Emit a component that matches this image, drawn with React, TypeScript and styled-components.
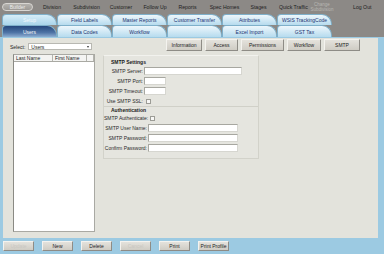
import styled, { createGlobalStyle } from "styled-components";

const GlobalStyle = createGlobalStyle`
  html, body {
    margin: 0;
    padding: 0;
  }
  body {
    font-family: "Liberation Sans", Arial, sans-serif;
  }
  * {
    box-sizing: border-box;
  }
`;

const Page = styled.div`
  width: 384px;
  height: 254px;
  background: #8c8986;
  overflow: hidden;
  display: flex;
  flex-direction: column;
`;

const TopNav = styled.div`
  height: 14px;
  display: flex;
  align-items: center;
  padding-left: 2px;
  font-size: 5px;
  color: #222;
`;

const BuilderPill = styled.div`
  width: 31px;
  height: 8px;
  border-radius: 4px;
  border: 1px solid #d8d6d2;
  background: linear-gradient(#b4b2ae, #9c9995);
  color: #ececec;
  display: flex;
  align-items: center;
  justify-content: center;
`;

const NavItem = styled.div<{ $w: number; $m: number; $muted?: boolean }>`
  width: ${(p) => p.$w}px;
  margin-left: ${(p) => p.$m}px;
  text-align: center;
  white-space: nowrap;
  line-height: 5px;
  color: ${(p) => (p.$muted ? "#b9b7b3" : "#222")};
  font-size: ${(p) => (p.$muted ? "4.5px" : "5.2px")};
`;

const TabRows = styled.div`
  width: 332px;
  padding-left: 2px;
  display: flex;
  flex-direction: column;
`;

const TabRow = styled.div<{ $h: number }>`
  height: ${(p) => p.$h}px;
  display: grid;
  grid-template-columns: repeat(6, 1fr);
`;

const Tab = styled.div<{ $tone?: "group" | "active" }>`
  display: flex;
  align-items: center;
  justify-content: center;
  font-size: 5px;
  border: 1px solid #7fb0ca;
  border-bottom: none;
  border-radius: 4px 10px 0 0;
  background: ${(p) =>
    p.$tone === "active"
      ? "linear-gradient(#25477c, #4f74a6 60%, #8eaed2)"
      : p.$tone === "group"
      ? "linear-gradient(#d6edf8, #a9d4ea)"
      : "linear-gradient(#eef7fc, #b6dbee)"};
  color: ${(p) => (p.$tone ? "#f4f8fb" : "#1c3270")};
`;

const Frame = styled.div`
  flex: 1;
  background: #9ccae2;
  padding: 1px 6px 0 3px;
  display: flex;
  flex-direction: column;
`;

const Panel = styled.div`
  height: 200px;
  background: #e3e3dc;
  display: flex;
`;

const LeftCol = styled.div`
  width: 100px;
  padding: 5px 0 0 7px;
  display: flex;
  flex-direction: column;
`;

const SelectRow = styled.div`
  display: flex;
  align-items: center;
  height: 7px;
  font-size: 5px;
  color: #222;
`;

const Dropdown = styled.div`
  margin-left: 3px;
  width: 64px;
  height: 7px;
  background: #fff;
  border: 1px solid #b8b8b2;
  display: flex;
  align-items: center;
  justify-content: space-between;
  padding: 0 2px;
  font-size: 5px;
  color: #222;
`;

const Caret = styled.span`
  width: 0;
  height: 0;
  border-left: 1.5px solid transparent;
  border-right: 1.5px solid transparent;
  border-top: 2px solid #333;
`;

const ListBox = styled.div`
  margin: 4px 0 0 3px;
  width: 82px;
  height: 178px;
  background: #fff;
  border: 1px solid #a9a9a3;
  border-left-color: #8a8a84;
`;

const ListHeader = styled.div`
  height: 7px;
  display: grid;
  grid-template-columns: 39px 34px 1fr;
  border-bottom: 1px solid #a9a9a3;
  background: #f4f4f2;
`;

const HeadCell = styled.div`
  font-size: 5px;
  color: #222;
  padding-left: 2px;
  line-height: 6px;
  border-right: 1px solid #b4b4ae;
`;

const RightCol = styled.div`
  flex: 1;
  display: flex;
  flex-direction: column;
`;

const ButtonRow = styled.div`
  display: flex;
  justify-content: flex-end;
  gap: 3px;
  padding: 1px 18px 0 0;
  height: 13px;
`;

const Button = styled.div<{ $w: number; $h?: number; $disabled?: boolean }>`
  width: ${(p) => p.$w}px;
  height: ${(p) => p.$h ?? 12}px;
  background: linear-gradient(#e4e2dc, #cfccc4);
  border: 1px solid;
  border-color: #f4f3ef #8e8c86 #8e8c86 #f4f3ef;
  display: flex;
  align-items: center;
  justify-content: center;
  font-size: 5px;
  color: ${(p) => (p.$disabled ? "#c9c7c1" : "#222")};
`;

const SettingsBox = styled.div`
  margin-top: 4px;
  width: 156px;
  height: 104px;
  border: 1px solid #d2d2ca;
  border-top-color: #f2f2ee;
  background: #e5e5df;
  padding-top: 3px;
`;

const Section = styled.div<{ $divider?: boolean }>`
  border-top: ${(p) => (p.$divider ? "1px solid #d0d0c8" : "none")};
`;

const SectionTitle = styled.div<{ $h: number }>`
  height: ${(p) => p.$h}px;
  line-height: ${(p) => p.$h}px;
  padding-left: 7px;
  font-size: 5px;
  font-weight: bold;
  color: #1a1a1a;
`;

const FormRow = styled.div<{ $label: number }>`
  height: 10px;
  display: grid;
  grid-template-columns: ${(p) => p.$label}px 1fr;
  align-items: center;
`;

const Label = styled.div`
  text-align: right;
  padding-right: 1px;
  font-size: 5px;
  color: #2a2a2a;
  white-space: nowrap;
`;

const TextInput = styled.div<{ $w: number }>`
  width: ${(p) => p.$w}px;
  height: 8px;
  background: #fff;
  border: 1px solid #a7a7a0;
  border-bottom-color: #d6d6d0;
  border-right-color: #d6d6d0;
`;

const Check = styled.div`
  width: 5px;
  height: 5px;
  margin-left: 2px;
  background: #f7f7f5;
  border: 1px solid #9c9c96;
`;

const BottomBar = styled.div`
  flex: 1;
  display: flex;
  align-items: center;
  gap: 8px;
  padding-bottom: 1px;
`;

const navItems = [
  { t: "Division", w: 20, m: 9 },
  { t: "Subdivision", w: 29, m: 10 },
  { t: "Customer", w: 24, m: 8 },
  { t: "Follow Up", w: 24, m: 10 },
  { t: "Reports", w: 19, m: 11 },
  { t: "Spec Homes", w: 31, m: 12 },
  { t: "Stages", w: 17, m: 10 },
  { t: "Quick Traffic", w: 25, m: 12 },
];

const topTabs = [
  "Field Labels",
  "Master Reports",
  "Customer Transfer",
  "Attributes",
  "WSIS TrackingCode",
];
const subTabs = ["Data Codes", "Workflow", "", "Excel Import", "GST Tax"];

const tabButtons = [
  { t: "Information", w: 36 },
  { t: "Access", w: 33 },
  { t: "Permissions", w: 43 },
  { t: "Workflow", w: 34 },
  { t: "SMTP", w: 36 },
];

const bottomButtons = [
  { t: "Update", d: true },
  { t: "New" },
  { t: "Delete" },
  { t: "Cancel", d: true },
  { t: "Print" },
  { t: "Print Profile" },
];

export default function App() {
  return (
    <Page>
      <GlobalStyle />
      <TopNav>
        <BuilderPill>Builder</BuilderPill>
        {navItems.map((n) => (
          <NavItem key={n.t} $w={n.w} $m={n.m}>
            {n.t}
          </NavItem>
        ))}
        <NavItem $w={26} $m={5} $muted>
          Change
          <br />
          Subdivision
        </NavItem>
        <NavItem $w={16} $m={18}>
          Log Out
        </NavItem>
      </TopNav>

      <TabRows>
        <TabRow $h={11}>
          <Tab $tone="group">Setup</Tab>
          {topTabs.map((t) => (
            <Tab key={t}>{t}</Tab>
          ))}
        </TabRow>
        <TabRow $h={12}>
          <Tab $tone="active">Users</Tab>
          {subTabs.map((t, i) => (
            <Tab key={i}>{t}</Tab>
          ))}
        </TabRow>
      </TabRows>

      <Frame>
        <Panel>
          <LeftCol>
            <SelectRow>
              Select:
              <Dropdown>
                Users
                <Caret />
              </Dropdown>
            </SelectRow>
            <ListBox>
              <ListHeader>
                <HeadCell>Last Name</HeadCell>
                <HeadCell>First Name</HeadCell>
                <HeadCell />
              </ListHeader>
            </ListBox>
          </LeftCol>

          <RightCol>
            <ButtonRow>
              {tabButtons.map((b) => (
                <Button key={b.t} $w={b.w}>
                  {b.t}
                </Button>
              ))}
            </ButtonRow>

            <SettingsBox>
              <Section>
                <SectionTitle $h={7}>SMTP Settings</SectionTitle>
                <FormRow $label={40}>
                  <Label>SMTP Server:</Label>
                  <TextInput $w={98} />
                </FormRow>
                <FormRow $label={40}>
                  <Label>SMTP Port:</Label>
                  <TextInput $w={22} />
                </FormRow>
                <FormRow $label={40}>
                  <Label>SMTP Timeout:</Label>
                  <TextInput $w={22} />
                </FormRow>
                <FormRow $label={40}>
                  <Label>Use SMTP SSL:</Label>
                  <Check />
                </FormRow>
              </Section>
              <Section $divider>
                <SectionTitle $h={6}>Authentication</SectionTitle>
                <FormRow $label={44}>
                  <Label>SMTP Authenticate:</Label>
                  <Check />
                </FormRow>
                <FormRow $label={44}>
                  <Label>SMTP User Name:</Label>
                  <TextInput $w={90} />
                </FormRow>
                <FormRow $label={44}>
                  <Label>SMTP Password:</Label>
                  <TextInput $w={90} />
                </FormRow>
                <FormRow $label={44}>
                  <Label>Confirm Password:</Label>
                  <TextInput $w={90} />
                </FormRow>
              </Section>
            </SettingsBox>
          </RightCol>
        </Panel>

        <BottomBar>
          {bottomButtons.map((b) => (
            <Button key={b.t} $w={31} $h={10} $disabled={b.d}>
              {b.t}
            </Button>
          ))}
        </BottomBar>
      </Frame>
    </Page>
  );
}
